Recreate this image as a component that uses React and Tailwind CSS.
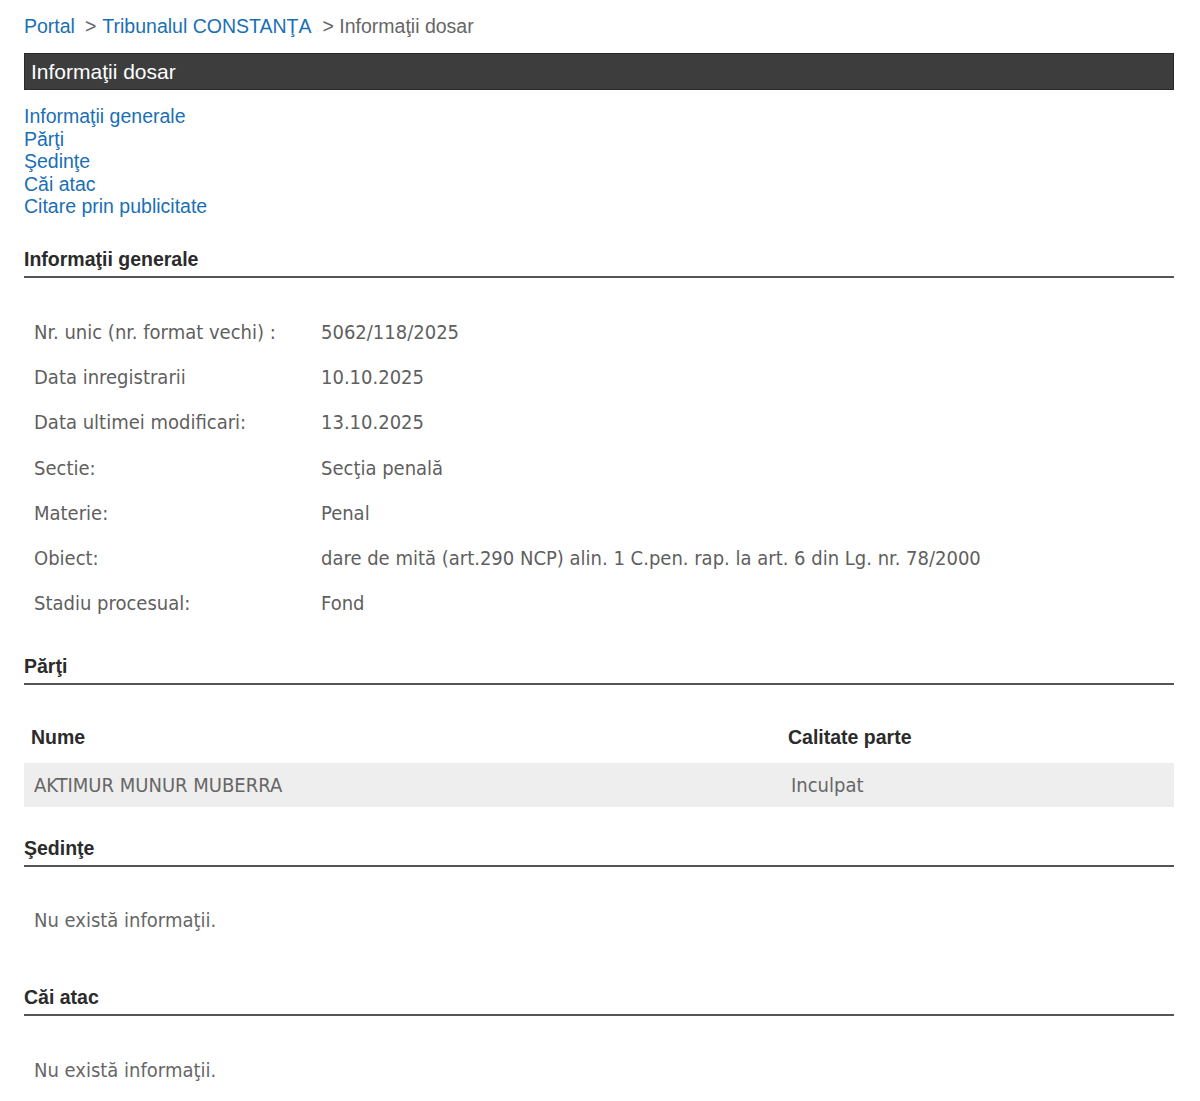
import React from "react";

const arial = { fontFamily: '"Liberation Sans", Arial, sans-serif' };
const tahoma = { fontFamily: '"DejaVu Sans", Tahoma, sans-serif', fontStretch: "condensed" };

function SectionHeading({ children, className = "" }) {
  return (
    <div className={"border-b-2 border-[#555555] " + className}>
      <h2 className="text-[19.5px] leading-[22px] font-bold text-[#2b2b2b] pb-[6px]">{children}</h2>
    </div>
  );
}

const rows = [
  ["Nr. unic (nr. format vechi) :", "5062/118/2025"],
  ["Data inregistrarii", "10.10.2025"],
  ["Data ultimei modificari:", "13.10.2025"],
  ["Sectie:", "Secţia penală"],
  ["Materie:", "Penal"],
  ["Obiect:", "dare de mită (art.290 NCP) alin. 1 C.pen. rap. la art. 6 din Lg. nr. 78/2000"],
  ["Stadiu procesual:", "Fond"],
];

export default function App() {
  return (
    <div className="min-h-[1101px] bg-white px-[24px] pt-[13px] pb-[20px] w-[1174px] box-content" style={arial}>
      <div className="w-[1150px]">
        <div className="text-[19.5px] leading-[26px] text-[#666666] flex">
          <a className="text-[#1b6fb5]">Portal</a>
          <span className="ml-[10px]">&gt; </span>
          <a className="text-[#1b6fb5] ml-[6px]">Tribunalul CONSTANŢA</a>
          <span className="ml-[11px]">&gt; Informaţii dosar</span>
        </div>
        <div className="mt-[14px] h-[37px] bg-[#3d3d3d] text-white text-[21px] leading-[35px] pl-[6px] border border-[#2a2a2a]">
          Informaţii dosar
        </div>
        <div className="mt-[15px] flex flex-col text-[19.5px] leading-[22.6px] text-[#1b6fb5]">
          <a>Informaţii generale</a>
          <a>Părţi</a>
          <a>Şedinţe</a>
          <a>Căi atac</a>
          <a>Citare prin publicitate</a>
        </div>

        <SectionHeading className="mt-[30px]">Informaţii generale</SectionHeading>
        <div className="pt-[31px] text-[20px] text-[#5f5f5f]" style={tahoma}>
          {rows.map(([k, v]) => (
            <div key={k} className="flex h-[45.3px] items-center pl-[10px]">
              <div className="w-[287px] shrink-0">{k}</div>
              <div>{v}</div>
            </div>
          ))}
        </div>

        <SectionHeading className="mt-[29px]">Părţi</SectionHeading>
        <div className="pt-[28px]">
          <div className="flex h-[50px] items-center text-[19.5px] font-bold text-[#2b2b2b]">
            <div className="w-[764px] pl-[7px]">Nume</div>
            <div>Calitate parte</div>
          </div>
          <div className="flex h-[44px] items-center bg-[#eeeeee] text-[20px] text-[#666666]" style={tahoma}>
            <div className="w-[767px] pl-[10px]">AKTIMUR MUNUR MUBERRA</div>
            <div>Inculpat</div>
          </div>
        </div>

        <SectionHeading className="mt-[30px]">Şedinţe</SectionHeading>
        <div className="h-[110px] pt-[38px] pl-[10px] text-[20px] text-[#666666]" style={tahoma}>
          Nu există informaţii.
        </div>

        <SectionHeading className="mt-[9px]">Căi atac</SectionHeading>
        <div className="pt-[39px] pl-[10px] text-[20px] text-[#666666]" style={tahoma}>
          Nu există informaţii.
        </div>
      </div>
    </div>
  );
}
